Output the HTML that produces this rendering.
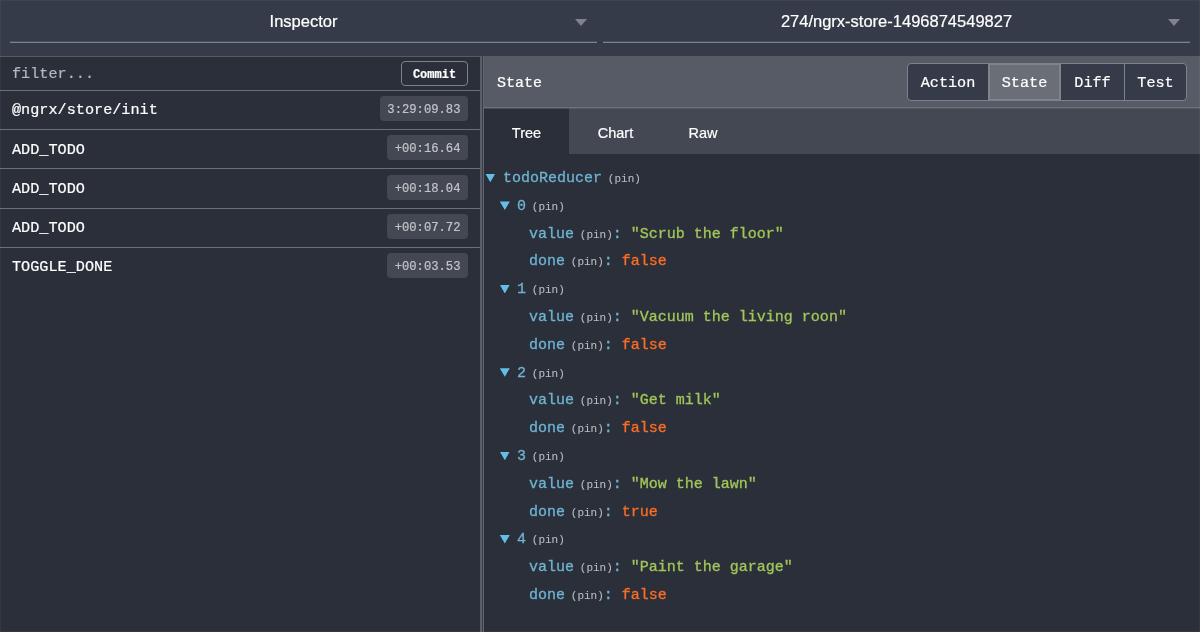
<!DOCTYPE html>
<html lang="en">
<head>
<meta charset="utf-8">
<title>Redux DevTools Inspector</title>
<style>
  * { box-sizing: border-box; margin: 0; padding: 0; }
  html, body { width: 1200px; height: 632px; overflow: hidden; background: #2a2f3a; }
  body { position: relative; font-family: "Liberation Mono", monospace; color: #ffffff; -webkit-text-stroke: 0.2px currentColor; }

  #app { position: absolute; left: 0; top: 0; width: 1200px; height: 632px; will-change: transform; }

  /* ---------- top bar ---------- */
  .topbar { position: absolute; left: 0; top: 0; width: 1200px; height: 56px; background: #353b48; }
  .select { position: absolute; top: 0; height: 43px; border-bottom: 1px solid #7e828b; box-shadow: inset 0 -1px 0 rgba(140,144,152,.25);
            font-family: "Liberation Sans", sans-serif; font-size: 16.5px; color: #ffffff;
            text-align: center; line-height: 42px; }
  .select.s1 { left: 10px; width: 587px; }
  .select.s2 { left: 603px; width: 587px; }
  .select .lbl { display: block; padding-right: 0; }
  .select .caret { position: absolute; right: 10px; top: 18.5px; width: 0; height: 0;
                   border-left: 6.5px solid transparent; border-right: 6.5px solid transparent;
                   border-top: 7px solid #7f838c; }

  /* ---------- left: action list ---------- */
  .left { position: absolute; left: 0; top: 56px; width: 480px; height: 576px; background: #2a2f3a;
          border-top: 1px solid #565c67; }
  .row { position: absolute; left: 0; width: 480px; border-bottom: 1px solid #6a6f79; }
  .row .name { position: absolute; left: 12px; font-size: 15.2px; color: #ffffff; white-space: pre; }
  .filter { top: 0; height: 34px; }
  .filter .name { color: #b4b7bc; top: 8px; }
  .commit { position: absolute; left: 401px; top: 4px; width: 67px; height: 25px; border: 1px solid #7d828b;
            border-radius: 4px; font-size: 12px; font-weight: bold; text-align: center; line-height: 26px; color: #fff; }
  .badge { position: absolute; right: 12px; height: 25px; background: #434853; border-radius: 4px;
           font-size: 12.2px; line-height: 28px; color: #c3c5c9; padding: 0 7.5px; white-space: pre; }

  /* ---------- divider ---------- */
  .divider { position: absolute; left: 480px; top: 56px; width: 4px; height: 576px; background: #3a3f4a;
             border-left: 2px solid #595e69; border-right: 1px solid #60656f; }

  /* ---------- right: inspector ---------- */
  .right { position: absolute; left: 484px; top: 56px; width: 716px; height: 576px; background: #2a2f3a; }
  .header { position: absolute; left: 0; top: 0; width: 716px; height: 52px; background: #565b66;
            border-bottom: 1px solid #6c717a; }
  .header .title { position: absolute; left: 13px; top: 19px; font-size: 15px; color: #fff; }
  .btns { position: absolute; left: 423px; top: 7px; width: 280px; height: 38px; border: 1px solid #7d828b;
          border-radius: 4px; overflow: hidden; background: #353b48; }
  .btns span { position: absolute; top: 0; height: 36px; line-height: 38px; text-align: center;
               font-size: 15.2px; color: #fff; border-right: 1px solid #7d828b; }
  .btns span.sel { background: #696e77; box-shadow: inset 0 0 0 1px #80858d; }
  .btns span:last-child { border-right: 0; }

  .tabs { position: absolute; left: 0; top: 52px; width: 716px; height: 46px; background: #434853; box-shadow: inset 0 1px 0 rgba(108,113,122,.45); }
  .tabs span { position: absolute; top: 0; height: 46px; line-height: 50px; text-align: center;
               font-family: "Liberation Sans", sans-serif; font-size: 14.5px; color: #fff; }
  .tabs span.sel { background: #2a2f3a; box-shadow: inset 0 1px 0 rgba(108,113,122,.45); }

  .tree { position: absolute; left: 0; top: 98px; width: 716px; height: 478px; }
  .ln { position: absolute; left: 0; height: 28px; line-height: 28px; font-size: 15px; white-space: pre; color: #6fb3d2; -webkit-text-stroke: 0.3px currentColor; }
  .ln .tri { position: absolute; top: 8.6px; width: 10px; height: 8.6px; background: #62bfe8;
             clip-path: polygon(0 0, 100% 0, 50% 100%); }
  .ln .t { position: absolute; top: 0; }
  .pin { font-size: 11px; color: #b9bcc1; padding-left: 5.8px; -webkit-text-stroke: 0.1px currentColor; }
  .str { color: #a1c659; }
  .bool { color: #fc6d24; }
  .frame { position: absolute; left: 0; top: 0; width: 1200px; height: 632px; border: 1px solid rgba(255,255,255,.045); pointer-events: none; }
</style>
</head>
<body>
<div id="app">

<div class="topbar">
  <div class="select s1"><span class="lbl">Inspector</span><i class="caret"></i></div>
  <div class="select s2"><span class="lbl">274/ngrx-store-1496874549827</span><i class="caret"></i></div>
</div>

<div class="left">
  <div class="row filter"><span class="name">filter...</span><span class="commit">Commit</span></div>
  <div class="row" style="top:34px;height:39px"><span class="name" style="top:10px">@ngrx/store/init</span><span class="badge" style="top:5px">3:29:09.83</span></div>
  <div class="row" style="top:73px;height:39px"><span class="name" style="top:11px">ADD_TODO</span><span class="badge" style="top:5px">+00:16.64</span></div>
  <div class="row" style="top:112px;height:40px"><span class="name" style="top:11px">ADD_TODO</span><span class="badge" style="top:6px">+00:18.04</span></div>
  <div class="row" style="top:152px;height:39px"><span class="name" style="top:10px">ADD_TODO</span><span class="badge" style="top:5px">+00:07.72</span></div>
  <div class="row" style="top:191px;height:39px;border-bottom:0"><span class="name" style="top:10px">TOGGLE_DONE</span><span class="badge" style="top:5px">+00:03.53</span></div>
</div>

<div class="divider"></div>

<div class="right">
  <div class="header">
    <span class="title">State</span>
    <div class="btns">
      <span style="left:0;width:81px">Action</span>
      <span class="sel" style="left:81px;width:72px">State</span>
      <span style="left:153px;width:64px">Diff</span>
      <span style="left:217px;width:61px">Test</span>
    </div>
  </div>
  <div class="tabs">
    <span class="sel" style="left:0;width:85px">Tree</span>
    <span style="left:85px;width:93px">Chart</span>
    <span style="left:178px;width:82px">Raw</span>
  </div>
  <div class="tree" id="tree">
    <div class="ln" style="top:11.0px"><i class="tri" style="left:1.3px"></i><span class="t" style="left:19px">todoReducer<span class="pin">(pin)</span></span></div>
    <div class="ln" style="top:38.8px"><i class="tri" style="left:15.8px"></i><span class="t" style="left:33px">0<span class="pin">(pin)</span></span></div>
    <div class="ln" style="top:66.6px"><span class="t" style="left:45px">value<span class="pin">(pin)</span>: <span class="str">"Scrub the floor"</span></span></div>
    <div class="ln" style="top:94.4px"><span class="t" style="left:45px">done<span class="pin">(pin)</span>: <span class="bool">false</span></span></div>
    <div class="ln" style="top:122.2px"><i class="tri" style="left:15.8px"></i><span class="t" style="left:33px">1<span class="pin">(pin)</span></span></div>
    <div class="ln" style="top:150.0px"><span class="t" style="left:45px">value<span class="pin">(pin)</span>: <span class="str">"Vacuum the living roon"</span></span></div>
    <div class="ln" style="top:177.8px"><span class="t" style="left:45px">done<span class="pin">(pin)</span>: <span class="bool">false</span></span></div>
    <div class="ln" style="top:205.6px"><i class="tri" style="left:15.8px"></i><span class="t" style="left:33px">2<span class="pin">(pin)</span></span></div>
    <div class="ln" style="top:233.4px"><span class="t" style="left:45px">value<span class="pin">(pin)</span>: <span class="str">"Get milk"</span></span></div>
    <div class="ln" style="top:261.2px"><span class="t" style="left:45px">done<span class="pin">(pin)</span>: <span class="bool">false</span></span></div>
    <div class="ln" style="top:289.0px"><i class="tri" style="left:15.8px"></i><span class="t" style="left:33px">3<span class="pin">(pin)</span></span></div>
    <div class="ln" style="top:316.8px"><span class="t" style="left:45px">value<span class="pin">(pin)</span>: <span class="str">"Mow the lawn"</span></span></div>
    <div class="ln" style="top:344.6px"><span class="t" style="left:45px">done<span class="pin">(pin)</span>: <span class="bool">true</span></span></div>
    <div class="ln" style="top:372.4px"><i class="tri" style="left:15.8px"></i><span class="t" style="left:33px">4<span class="pin">(pin)</span></span></div>
    <div class="ln" style="top:400.2px"><span class="t" style="left:45px">value<span class="pin">(pin)</span>: <span class="str">"Paint the garage"</span></span></div>
    <div class="ln" style="top:428.0px"><span class="t" style="left:45px">done<span class="pin">(pin)</span>: <span class="bool">false</span></span></div>
  </div>
</div>

<div class="frame"></div>
</div>
</body>
</html>
